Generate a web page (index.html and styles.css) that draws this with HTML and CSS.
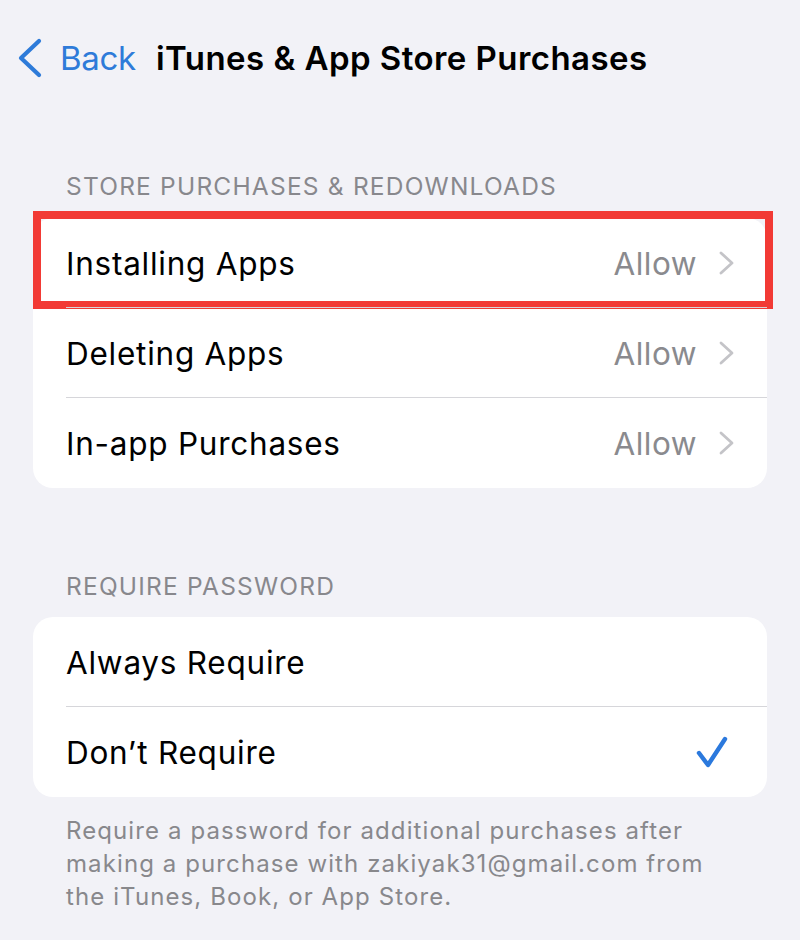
FILE: index.html
```html
<!DOCTYPE html>
<html lang="en">
<head>
<meta charset="utf-8">
<title>iTunes &amp; App Store Purchases</title>
<link rel="stylesheet" href="styles.css">
</head>
<body>
  <header class="nav">
    <a class="back" href="#">
      <svg class="back-icon" width="28" height="40" viewBox="0 0 28 40" aria-hidden="true">
        <path d="M23 3 L5 20 L23 37" fill="none" stroke="currentColor" stroke-width="4.2" stroke-linecap="round" stroke-linejoin="round"/>
      </svg>
      <span class="back-label">Back</span>
    </a>
    <h1 class="title">iTunes &amp; App Store Purchases</h1>
  </header>

  <main>
    <h2 class="section-head first">STORE PURCHASES &amp; REDOWNLOADS</h2>
    <ul class="group">
      <li class="row highlighted">
        <span class="label">Installing Apps</span>
        <span class="value">Allow</span>
        <svg class="chev" width="16" height="24" viewBox="0 0 16 24" aria-hidden="true"><path d="M2 2 L13 12 L2 22" fill="none" stroke="currentColor" stroke-width="2.8" stroke-linecap="round" stroke-linejoin="round"/></svg>
        <span class="mark"></span>
      </li>
      <li class="row">
        <span class="label">Deleting Apps</span>
        <span class="value">Allow</span>
        <svg class="chev" width="16" height="24" viewBox="0 0 16 24" aria-hidden="true"><path d="M2 2 L13 12 L2 22" fill="none" stroke="currentColor" stroke-width="2.8" stroke-linecap="round" stroke-linejoin="round"/></svg>
      </li>
      <li class="row">
        <span class="label">In-app Purchases</span>
        <span class="value">Allow</span>
        <svg class="chev" width="16" height="24" viewBox="0 0 16 24" aria-hidden="true"><path d="M2 2 L13 12 L2 22" fill="none" stroke="currentColor" stroke-width="2.8" stroke-linecap="round" stroke-linejoin="round"/></svg>
      </li>
    </ul>

    <h2 class="section-head second">REQUIRE PASSWORD</h2>
    <ul class="group">
      <li class="row">
        <span class="label">Always Require</span>
      </li>
      <li class="row">
        <span class="label">Don’t Require</span>
        <svg class="check" width="32" height="32" viewBox="0 0 32 32" aria-hidden="true"><path d="M3 17 L12 29 L29 3" fill="none" stroke="currentColor" stroke-width="4.4" stroke-linecap="round" stroke-linejoin="round"/></svg>
      </li>
    </ul>
    <p class="footnote">Require a password for additional purchases after<br>making a purchase with zakiyak31@gmail.com from<br>the iTunes, Book, or App Store.</p>
  </main>
</body>
</html>
```

FILE: styles.css
```css
* { box-sizing: border-box; }

html, body {
  margin: 0;
  padding: 0;
}

body {
  background: #f2f2f7;
  font-family: Inter, "Noto Sans", "Liberation Sans", sans-serif;
  color: #000;
  width: 800px;
  height: 940px;
  overflow: hidden;
}

/* navigation bar */
.nav {
  height: 116px;
  display: flex;
  align-items: center;
  padding-left: 16px;
}

.back {
  display: flex;
  align-items: center;
  color: #2e7bd9;
  text-decoration: none;
}

.back-icon {
  display: block;
  margin-right: 16px;
}

.back-label {
  font-size: 33px;
  letter-spacing: -0.3px;
}

.title {
  margin: 0 0 0 20px;
  font-size: 33px;
  font-weight: 600;
  letter-spacing: 0.45px;
  white-space: nowrap;
}

/* grouped lists */
.section-head {
  margin: 0;
  padding: 0 66px;
  font-size: 24.5px;
  line-height: 30px;
  font-weight: 400;
  color: #88888d;
  letter-spacing: 1.2px;
}

.section-head.first { padding-top: 55px; padding-bottom: 17px; }
.section-head.second { padding-top: 83px; padding-bottom: 16px; }

.group {
  list-style: none;
  margin: 0 33px;
  padding: 0;
  background: #fff;
  border-radius: 20px;
}

.row {
  position: relative;
  height: 90px;
  display: flex;
  align-items: center;
  padding: 0 32px 0 33px;
}

.row + .row::before {
  content: "";
  position: absolute;
  top: -1px;
  left: 33px;
  right: 0;
  height: 1px;
  background: #d6d6da;
}

.label {
  flex: 1;
  font-size: 31.5px;
  letter-spacing: 0.75px;
}

.value {
  font-size: 31.5px;
  color: #8a8a8e;
  letter-spacing: 0.5px;
  margin-right: 22px;
}

.chev {
  display: block;
  color: #c4c4c8;
}

.check {
  display: block;
  color: #2b79dd;
  margin-right: 7px;
}

/* red annotation frame around the first row */
.mark {
  position: absolute;
  top: -7px;
  left: 0;
  width: 740px;
  height: 98px;
  border: 8px solid #f23a35;
  pointer-events: none;
}

.footnote {
  margin: 0;
  padding: 17px 0 0 66px;
  font-size: 24px;
  line-height: 33px;
  color: #88888c;
  letter-spacing: 1.1px;
  white-space: nowrap;
}
```
